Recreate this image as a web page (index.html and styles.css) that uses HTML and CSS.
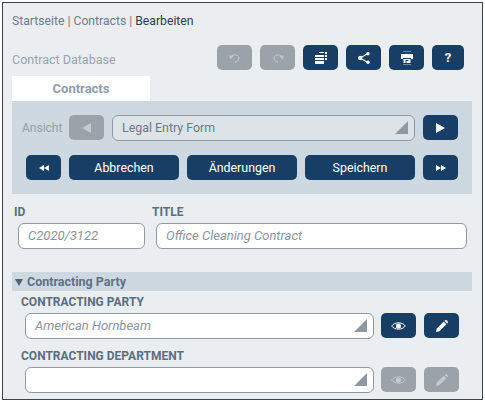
FILE: index.html
```html
<!DOCTYPE html>
<html lang="en">
<head>
    <meta charset="UTF-8">
    <title>Contracts</title>
    <link rel="stylesheet" href="styles.css">
</head>
<body>
    <div class="frame">
        <div class="crumbs">Startseite | Contracts | <span class="crumb-current">Bearbeiten</span></div>

        <div class="toolbar">
            <span class="db-name">Contract Database</span>
            <div class="tools">
                <button class="btn off"><svg width="12" height="10" viewBox="0 0 12 10"><path d="M2.500 3.500 A4 3.600 0 1 1 6 9" fill="none" stroke="#c4c9cc" stroke-width="1"/><path d="M0 2.500 L4.500 3 L1.500 6.500 Z" fill="#c4c9cc"/></svg></button>
                <button class="btn off"><svg width="12" height="10" viewBox="0 0 12 10"><path d="M9.500 3.500 A4 3.600 0 1 0 6 9" fill="none" stroke="#c4c9cc" stroke-width="1"/><path d="M12 2.500 L7.500 3 L10.500 6.500 Z" fill="#c4c9cc"/></svg></button>
                <button class="btn"><svg width="12" height="12" viewBox="0 0 12 12" fill="#fff"><path d="M4 0h5v1H4zM10 0h2v2h-2zM10 3h2v2h-2zM10 6h2v2h-2z"/><path d="M0 3h9v2H0zM0 6h9v2H0zM0 9h9v3H0z"/></svg></button>
                <button class="btn"><svg width="12" height="12" viewBox="0 0 12 12"><path d="M10 1.500 L2 6 L10 10.500" fill="none" stroke="#fff" stroke-width="1.200"/><circle cx="2.200" cy="6" r="2.200" fill="#fff"/><circle cx="10" cy="1.800" r="1.700" fill="#fff"/><circle cx="10" cy="10.200" r="1.700" fill="#fff"/></svg></button>
                <button class="btn"><svg width="12" height="14" viewBox="0 0 12 14"><path d="M2 0h8v1H2z" fill="#6f8aa5"/><path d="M0 3h12v5h-2V7H2v1H0z" fill="#fff"/><path d="M2.500 8h7v4h-7z" fill="#fff"/><path d="M4.500 9h3v1h-2v2h-1z" fill="#173f66"/><path d="M2 13h8v1H2z" fill="#6f8aa5"/></svg></button>
                <button class="btn help">?</button>
            </div>
        </div>

        <div class="tab">Contracts</div>
        <div class="panel">
            <div class="panel-row">
                <span class="view-label">Ansicht</span>
                <button class="btn off"><span class="arrow left"></span></button>
                <div class="select view-select">Legal Entry Form</div>
                <button class="btn"><span class="arrow right"></span></button>
            </div>
            <div class="panel-row actions">
                <button class="btn"><span class="double left"></span><span class="double left"></span></button>
                <button class="btn wide">Abbrechen</button>
                <button class="btn wide">Änderungen</button>
                <button class="btn wide">Speichern</button>
                <button class="btn"><span class="double right"></span><span class="double right"></span></button>
            </div>
        </div>

        <div class="id-row">
            <div class="field id-field">
                <label>ID</label>
                <div class="input">C2020/3122</div>
            </div>
            <div class="field title-field">
                <label>TITLE</label>
                <div class="input">Office Cleaning Contract</div>
            </div>
        </div>

        <div class="section-head"><span class="caret"></span>Contracting Party</div>
        <div class="section-body">
            <label>CONTRACTING PARTY</label>
            <div class="lookup">
                <div class="select white">American Hornbeam</div>
                <button class="btn"><svg width="15" height="10" viewBox="0 0 15 10"><path d="M0.700 5 C3.500 0.800 11.500 0.800 14.300 5 C11.500 9.200 3.500 9.200 0.700 5 Z" fill="none" stroke="#fff" stroke-width="1"/><circle cx="7.500" cy="5" r="2.600" fill="#fff"/></svg></button>
                <button class="btn"><svg width="12" height="12" viewBox="0 0 12 12" fill="#fff"><path d="M0 12 L0.800 8.600 L7.800 1.600 L10.400 4.200 L3.400 11.200 Z"/><path d="M8.600 0.800 L9.400 0 Q10 -0.200 10.600 0.300 L11.700 1.400 Q12.200 2 12 2.600 L11.200 3.400 Z"/></svg></button>
            </div>
            <label class="second">CONTRACTING DEPARTMENT</label>
            <div class="lookup">
                <div class="select white"></div>
                <button class="btn off"><svg width="15" height="10" viewBox="0 0 15 10"><path d="M0.700 5 C3.500 0.800 11.500 0.800 14.300 5 C11.500 9.200 3.500 9.200 0.700 5 Z" fill="none" stroke="#c4c9cc" stroke-width="1"/><circle cx="7.500" cy="5" r="2.600" fill="#c4c9cc"/></svg></button>
                <button class="btn off"><svg width="12" height="12" viewBox="0 0 12 12" fill="#c4c9cc"><path d="M0 12 L0.800 8.600 L7.800 1.600 L10.400 4.200 L3.400 11.200 Z"/><path d="M8.600 0.800 L9.400 0 Q10 -0.200 10.600 0.300 L11.700 1.400 Q12.200 2 12 2.600 L11.200 3.400 Z"/></svg></button>
            </div>
        </div>
    </div>
</body>
</html>
```

FILE: styles.css
```css
html, body {
    margin: 0;
    height: 100%;
    background: #fff;
}
body {
    font-family: Roboto, 'Liberation Sans', sans-serif;
    font-size: 13px;
    color: #5b6b7e;
    overflow: hidden;
}
.frame {
    box-sizing: border-box;
    width: 481px;
    height: 398px;
    margin: 2px 0 0 2px;
    padding: 0 10px 0 9px;
    background: #eaeef1;
    border: 1px solid #39444e;
}
.crumbs {
    padding-top: 11px;
    height: 32px;
    box-sizing: border-box;
    font-size: 12.2px;
    line-height: 15px;
    color: #6d7c8c;
}
.crumb-current {
    color: #2f3b4a;
}
.toolbar {
    display: flex;
    align-items: center;
    justify-content: space-between;
    height: 25px;
    margin-top: 10px;
}
.db-name {
    padding-top: 3px;
    font-size: 12.5px;
    color: #9aa4ae;
}
.tools {
    display: flex;
    gap: 8px;
    margin-right: 8px;
}
.btn {
    display: flex;
    align-items: center;
    justify-content: center;
    flex: none;
    box-sizing: border-box;
    width: 35px;
    height: 25px;
    padding: 0;
    border: none;
    border-radius: 5px;
    background: #173f66;
    color: #fff;
    font-family: inherit;
    font-size: 12.4px;
}
.btn.off {
    background: #9ca3a8;
}
.btn.wide {
    width: 110px;
}
.btn.help {
    width: 32px;
    font-weight: bold;
    font-size: 13px;
}
.tab {
    width: 138px;
    height: 25px;
    margin-top: 6px;
    background: #fff;
    color: #8d9eb0;
    font-weight: bold;
    font-size: 13px;
    line-height: 25px;
    text-align: center;
}
.panel {
    box-sizing: border-box;
    width: 460px;
    height: 93px;
    padding: 14px 14px 0 10px;
    background: #cdd8e1;
}
.panel-row {
    display: flex;
    align-items: flex-start;
    gap: 8px;
}
.view-label {
    width: 39px;
    font-size: 12px;
    line-height: 26px;
    color: #959fa8;
}
.actions {
    margin-top: 14px;
    padding-left: 4px;
}
.select {
    position: relative;
    box-sizing: border-box;
    height: 26px;
    border: 1px solid #8c9aa8;
    border-radius: 6px;
    background: #dde3e7;
    padding-left: 9px;
    font-size: 12.4px;
    line-height: 24px;
    color: #6c7a88;
}
.select::after {
    content: "";
    position: absolute;
    right: 6px;
    bottom: 6px;
    width: 13px;
    height: 13px;
    background: #8e99a3;
    clip-path: polygon(100% 0, 100% 100%, 0 100%);
}
.view-select {
    width: 304px;
}
.select.white {
    flex: 1;
    background: #fff;
    font-size: 13px;
    font-style: italic;
    color: #8b96a1;
}
.arrow {
    width: 0;
    height: 0;
    border-top: 5px solid transparent;
    border-bottom: 5px solid transparent;
}
.arrow.left {
    border-right: 9px solid #c6cbce;
}
.arrow.right {
    border-left: 9px solid #fff;
}
.double {
    width: 0;
    height: 0;
    border-top: 3px solid transparent;
    border-bottom: 3px solid transparent;
}
.double.left {
    border-right: 5px solid #fff;
}
.double.right {
    border-left: 5px solid #fff;
}
label {
    display: block;
    font-size: 12px;
    font-weight: bold;
    line-height: 14px;
    color: #5d6d80;
}
.id-row {
    display: flex;
    height: 78px;
    padding-top: 11px;
    box-sizing: border-box;
}
.id-field {
    width: 136px;
    padding-left: 2px;
}
.title-field {
    width: 320px;
    margin-left: 2px;
}
.input {
    box-sizing: border-box;
    height: 26px;
    margin: 4px 0 0 4px;
    padding-left: 9px;
    border: 1px solid #8c9aa8;
    border-radius: 6px;
    background: #fff;
    font-style: italic;
    font-size: 13px;
    line-height: 24px;
    color: #8b96a1;
}
.id-field .input {
    width: 127px;
}
.title-field .input {
    width: 311px;
}
.section-head {
    display: flex;
    align-items: center;
    gap: 4px;
    box-sizing: border-box;
    width: 460px;
    height: 19px;
    padding: 1px 0 0 3px;
    background: #cdd8e1;
    font-size: 12.5px;
    font-weight: bold;
    line-height: 18px;
    color: #5d7187;
}
.caret {
    width: 0;
    height: 0;
    border-left: 4px solid transparent;
    border-right: 4px solid transparent;
    border-top: 7px solid #4f6378;
}
.section-body {
    padding: 4px 13px 0 9px;
}
.lookup {
    display: flex;
    gap: 8px;
    margin: 4px 0 0 4px;
}
.lookup .select {
    margin-right: -1px;
}
.second {
    margin-top: 10px;
}
```
